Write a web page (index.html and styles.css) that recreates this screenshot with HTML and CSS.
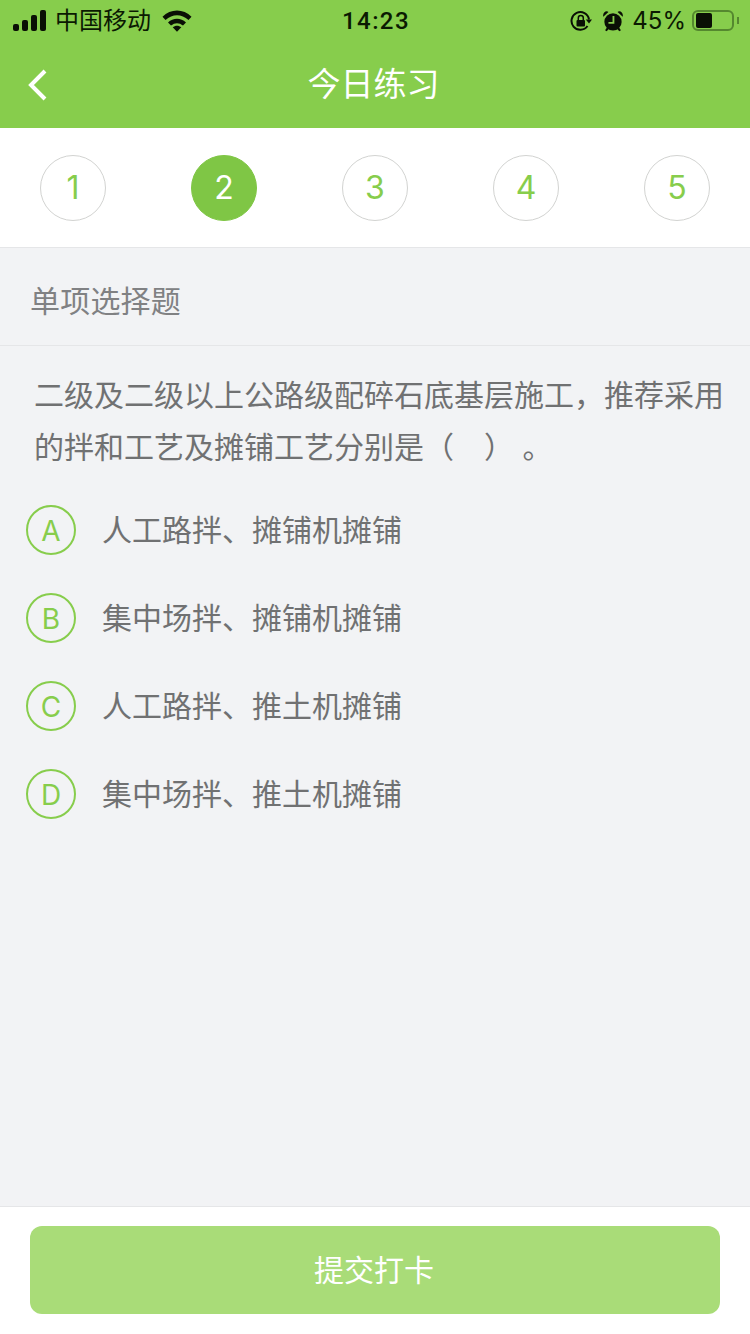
FILE: index.html
```html
<!DOCTYPE html>
<html lang="zh">
<head>
<meta charset="utf-8">
<title>今日练习</title>
<link rel="stylesheet" href="styles.css">
</head>
<body>
<div class="page">
  <header class="header">
    <div class="status">
      <div class="status-left">
        <div class="signal"><i class="s1"></i><i class="s2"></i><i class="s3"></i><i class="s4"></i></div>
        <span class="carrier">中国移动</span>
        <svg class="wifi" width="30" height="22" viewBox="0 0 30 22"><path d="M.5 6.800C8.500-1.600 21.500-1.600 29.500 6.800l-3 3.200C19.500 3.500 10.500 3.500 3.500 10z"/><path d="M6 12.500c5.200-5 12.800-5 18 0l-3 3.100c-3.600-3.300-8.400-3.300-12 0z"/><path d="M10.700 17.300c2.600-2.100 6-2.100 8.600 0L15 21.800z"/></svg>
      </div>
      <span class="time">14:23</span>
      <div class="status-right">
        <svg class="lock" width="22" height="22" viewBox="0 0 22 22"><path class="ring" d="M17.500 16A8.800 8.800 0 1 1 19 9.500"/><path d="M15.800 9.500h6.200L19 13.500z"/><rect x="6.500" y="10" width="8.500" height="6.500" rx="1"/><path class="ring thin" d="M8.300 10V8a2.500 2.500 0 0 1 5 0v2"/></svg>
        <svg class="alarm" width="20" height="22" viewBox="0 0 22 23"><path d="M.3 6.800 6 1.600C3.800-.8-.8 2 .3 6.800zM21.700 6.800 16 1.600c2.200-2.400 6.800.4 5.700 5.200zM4.500 18.500l-2.200 3.200 1.700 1 2.700-2.700zM17.500 18.500l2.200 3.200-1.700 1-2.700-2.700z"/><circle cx="11" cy="12.500" r="9.500"/><path class="hand" d="M11.500 6v7.500H6"/></svg>
        <span class="pct">45%</span>
        <div class="battery"><div class="level"></div></div>
        <div class="nub"></div>
      </div>
    </div>
    <div class="nav">
      <svg class="back" width="20" height="32" viewBox="0 0 20 32"><path d="M17 2 3 16l14 14"/></svg>
      <h1 class="title">今日练习</h1>
    </div>
  </header>

  <nav class="steps">
    <span class="step">1</span>
    <span class="step current">2</span>
    <span class="step">3</span>
    <span class="step">4</span>
    <span class="step">5</span>
  </nav>

  <main class="main">
    <div class="qtype">单项选择题</div>
    <p class="question">二级及二级以上公路级配碎石底基层施工，推荐采用的拌和工艺及摊铺工艺分别是（&emsp;）&nbsp;。</p>
    <ul class="options">
      <li class="option"><span class="letter">A</span><span class="otext">人工路拌、摊铺机摊铺</span></li>
      <li class="option"><span class="letter">B</span><span class="otext">集中场拌、摊铺机摊铺</span></li>
      <li class="option"><span class="letter">C</span><span class="otext">人工路拌、推土机摊铺</span></li>
      <li class="option"><span class="letter">D</span><span class="otext">集中场拌、推土机摊铺</span></li>
    </ul>
  </main>

  <footer class="footer">
    <button class="submit">提交打卡</button>
  </footer>
</div>
</body>
</html>
```
FILE: styles.css
```css
* { box-sizing: border-box; }
html, body { margin: 0; padding: 0; }
body {
  width: 750px;
  height: 1334px;
  overflow: hidden;
  font-family: Inter, "Noto Sans CJK SC", sans-serif;
  font-weight: 300;
  background: #f2f3f5;
}
.page { display: flex; flex-direction: column; height: 1334px; }

.header { height: 128px; background: #87cd4c; flex: none; }
.status {
  height: 41px;
  display: grid;
  grid-template-columns: 1fr auto 1fr;
  align-items: center;
  padding: 0 11px 0 13px;
  color: #0b1a02;
}
.status-left { display: flex; align-items: center; }
.status-right { display: flex; align-items: center; justify-content: flex-end; }
.signal { display: flex; align-items: flex-end; gap: 3px; height: 21px; width: 33px; }
.signal i { display: block; width: 6px; background: #0a0f05; border-radius: 2px; }
.signal .s1 { height: 7px; }
.signal .s2 { height: 11px; }
.signal .s3 { height: 16px; }
.signal .s4 { height: 21px; }
.carrier { font-size: 24px; margin-left: 9px; line-height: 30px; font-weight: 400; }
.wifi { margin-left: 11px; fill: #0a0f05; }
.time { font-family: Roboto, sans-serif; font-size: 24px; font-weight: 500; letter-spacing: 1.4px; }
.lock { fill: #0a0f05; margin-right: 11px; }
.ring { fill: none; stroke: #0a0f05; stroke-width: 2; }
.ring.thin { stroke-width: 1.5; }
.alarm { fill: #0a0f05; margin-right: 9px; }
.hand { fill: none; stroke: #87cd4c; stroke-width: 2; }
.pct { font-size: 24px; font-weight: 400; margin-right: 6px; }
.battery {
  width: 42px;
  height: 21px;
  border: 2px solid #55882f;
  border-radius: 6px;
  padding: 1px 2px;
}
.level { width: 16px; height: 15px; background: #0a0f05; border-radius: 2px; }
.nub { width: 2px; height: 7px; background: #55882f; margin-left: 3px; }

.nav {
  height: 87px;
  display: grid;
  grid-template-columns: 1fr auto 1fr;
  align-items: center;
}
.back { margin-left: 28px; fill: none; stroke: #fff; stroke-width: 4; }
.title {
  margin: 0 3px 6px 0;
  font-size: 33px;
  font-weight: 400;
  color: #fff;
}

.steps {
  height: 120px;
  flex: none;
  background: #fff;
  border-bottom: 1px solid #e5e6e8;
  display: flex;
  align-items: center;
  justify-content: space-between;
  padding: 1px 40px 0;
}
.step {
  width: 66px;
  height: 66px;
  border-radius: 50%;
  border: 1px solid #d2d3d1;
  color: #87cd4c;
  font-size: 32px;
  font-weight: 400;
  padding-bottom: 2px;
  display: flex;
  align-items: center;
  justify-content: center;
}
.step.current { background: #7fc645; border-color: #7fc645; color: #fff; }

.main { flex: 1; min-height: 0; }
.qtype {
  height: 98px;
  padding: 4px 30px 0;
  border-bottom: 1px solid #e5e6e8;
  display: flex;
  align-items: center;
  font-size: 30px;
  font-weight: 400;
  letter-spacing: .2px;
  color: #808183;
}
.question {
  margin: 0;
  padding: 23px 20px 0 34px;
  font-size: 30px;
  font-weight: 400;
  line-height: 52px;
  color: #707172;
}
.options { list-style: none; margin: 13px 0 0; padding: 0 0 0 26px; }
.option { height: 88px; display: flex; align-items: center; }
.letter {
  width: 50px;
  height: 50px;
  border-radius: 50%;
  border: 2px solid #87cd4c;
  color: #87cd4c;
  font-size: 28px;
  font-weight: 400;
  padding-top: 2px;
  display: flex;
  align-items: center;
  justify-content: center;
  flex: none;
}
.otext { margin: 0 0 4px 26px; font-size: 30px; font-weight: 400; color: #707172; }

.footer {
  height: 128px;
  flex: none;
  background: #fff;
  border-top: 1px solid #e5e6e8;
  padding: 19px 30px 0;
}
.submit {
  display: block;
  width: 690px;
  height: 88px;
  border: 0;
  border-radius: 12px;
  background: #a9dc78;
  color: #fff;
  font: inherit;
  font-size: 30px;
  font-weight: 400;
  padding: 0 2px 4px 0;
}
```
